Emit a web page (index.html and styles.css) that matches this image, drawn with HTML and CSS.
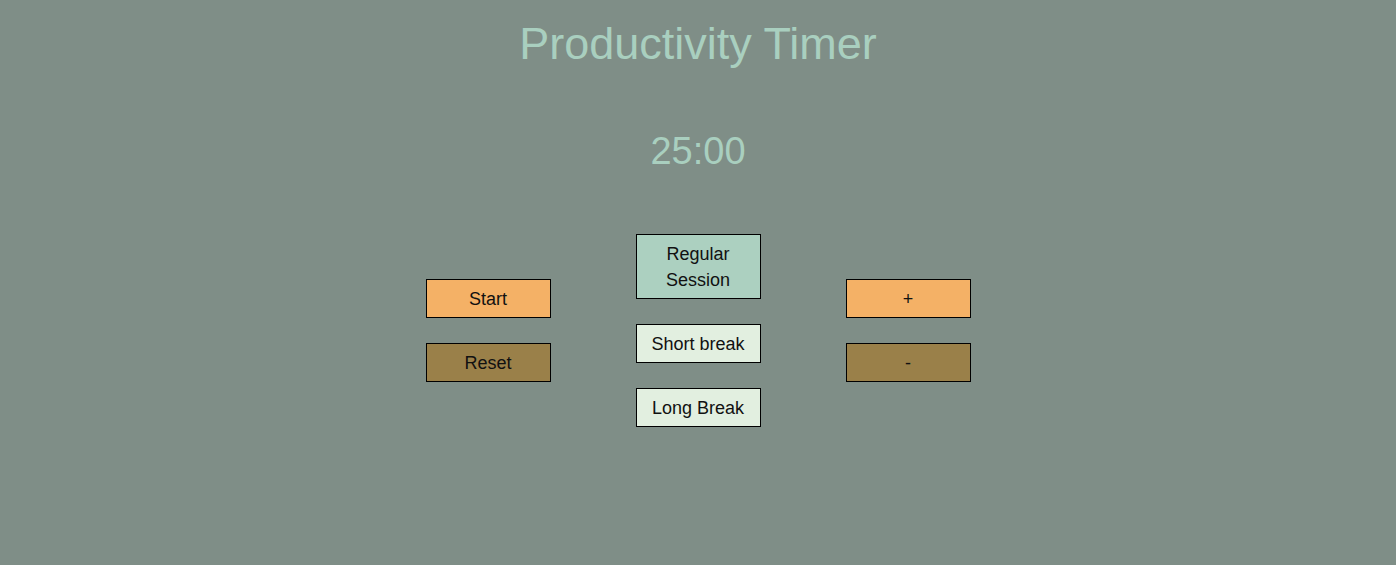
FILE: index.html
```html
<!DOCTYPE html>
<html lang="en">
<head>
<meta charset="utf-8">
<title>Productivity Timer</title>
<link rel="stylesheet" href="styles.css">
</head>
<body>
<main class="app">
  <h1 class="title">Productivity Timer</h1>
  <div class="timer">25:00</div>
  <div class="controls">
    <div class="col">
      <button class="btn btn-orange">Start</button>
      <button class="btn btn-brown">Reset</button>
    </div>
    <div class="col">
      <button class="btn btn-mint">Regular Session</button>
      <button class="btn btn-light">Short break</button>
      <button class="btn btn-light">Long Break</button>
    </div>
    <div class="col">
      <button class="btn btn-orange">+</button>
      <button class="btn btn-brown">-</button>
    </div>
  </div>
</main>
</body>
</html>
```
FILE: styles.css
```css
html, body {
  margin: 0;
  padding: 0;
}
body {
  background: #7f8e87;
  font-family: "Liberation Sans", Arial, sans-serif;
  min-height: 565px;
}
.app {
  display: flex;
  flex-direction: column;
  align-items: center;
}
.title {
  margin: 18px 0 0;
  font-size: 45px;
  font-weight: normal;
  color: #a9cfbf;
  line-height: normal;
}
.timer {
  margin-top: 60px;
  font-size: 38px;
  color: #a9cfbf;
  line-height: normal;
}
.controls {
  margin-top: 61px;
  display: flex;
  align-items: center;
  gap: 85px;
}
.col {
  display: flex;
  flex-direction: column;
  gap: 25px;
}
.btn {
  box-sizing: border-box;
  width: 125px;
  margin: 0;
  padding: 5.5px 4px;
  border: 1px solid #000;
  border-radius: 0;
  font-family: "Liberation Sans", Arial, sans-serif;
  font-size: 18px;
  line-height: 26px;
  color: #111;
  text-align: center;
}
.btn-orange { background: #f4b166; }
.btn-brown { background: #9a8049; }
.btn-mint { background: #acd0c0; }
.btn-light { background: #e2efe0; }
```
